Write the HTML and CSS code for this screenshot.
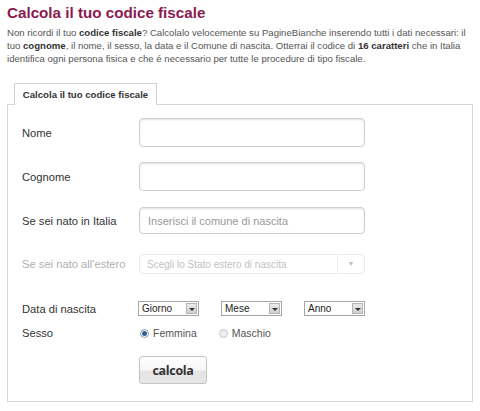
FILE: index.html
```html
<!DOCTYPE html>
<html lang="it">
<head>
<meta charset="utf-8">
<title>Calcola il tuo codice fiscale</title>
<link rel="stylesheet" href="styles.css">
</head>
<body>
<div class="page">
  <h1 class="title">Calcola il tuo codice fiscale</h1>
  <p class="intro">Non ricordi il tuo <b>codice fiscale</b>? Calcolalo velocemente su PagineBianche inserendo tutti i dati necessari: il<br>tuo <b>cognome</b>, il nome, il sesso, la data e il Comune di nascita. Otterrai il codice di <b>16 caratteri</b> che in Italia<br>identifica ogni persona fisica e che é necessario per tutte le procedure di tipo fiscale.</p>
  <div class="tabs"><div class="tab">Calcola il tuo codice fiscale</div></div>
  <div class="panel">
    <div class="row r1"><span class="label">Nome</span><span class="field"></span></div>
    <div class="row r2"><span class="label">Cognome</span><span class="field"></span></div>
    <div class="row r3"><span class="label">Se sei nato in Italia</span><span class="field short"><span class="ph">Inserisci il comune di nascita</span></span></div>
    <div class="row r4"><span class="label disabled">Se sei nato all'estero</span><span class="dsel"><span class="dtext">Scegli lo Stato estero di nascita</span><span class="darrow">&#9660;</span></span></div>
    <div class="row r5"><span class="label">Data di nascita</span>
      <div class="dates">
        <span class="sel">Giorno<span class="sarrow"></span></span>
        <span class="sel">Mese<span class="sarrow"></span></span>
        <span class="sel">Anno<span class="sarrow"></span></span>
      </div>
    </div>
    <div class="row r6"><span class="label">Sesso</span>
      <div class="radios">
        <span class="radio"><span class="dot on"></span>Femmina</span>
        <span class="radio"><span class="dot"></span>Maschio</span>
      </div>
    </div>
    <div class="row r7"><span class="label"></span><span class="btn">calcola</span></div>
  </div>
</div>
</body>
</html>
```

FILE: styles.css
```css
html, body { margin: 0; padding: 0; background: #fff; }
body { font-family: "Liberation Sans", Arial, sans-serif; }
.page { padding: 0 7px; width: 466px; }
.title {
  margin: 0; padding-top: 3px;
  font-size: 15.2px; line-height: 20px; font-weight: bold;
  color: #8a1a50;
}
.intro {
  margin: 3px 0 0 0;
  font-size: 9.6px; line-height: 13px; color: #555;
  white-space: nowrap;
}
.intro b { color: #333; }
.tabs { display: flex; padding-left: 7px; margin-top: 17px; }
.tab {
  width: 141px; height: 21px; box-sizing: content-box;
  border: 1px solid #d0d0d0; border-bottom: none;
  background: #fff;
  font-size: 9.6px; font-weight: bold; color: #333;
  line-height: 21px; text-align: center; white-space: nowrap;
  position: relative; top: 1px;
}
.panel {
  border: 1px solid #d8d8d8;
  padding: 13px 0 14px 14px;
  height: 269px; box-sizing: content-box;
  display: flex; flex-direction: column;
}
.row { display: flex; align-items: center; }
.label { width: 117px; flex: none; font-size: 11.2px; color: #333; white-space: nowrap; }
.label.disabled { color: #b0b0b0; }
.field {
  width: 216px; height: 27px;
  border: 1px solid #cfcfcf; border-radius: 4px;
  box-shadow: inset 0 1px 2px rgba(0,0,0,0.12);
  display: flex; align-items: center; padding-left: 8px;
  box-sizing: content-box;
}
.field.short { height: 25px; }
.ph { font-size: 11px; color: #999; }
.r2 { margin-top: 15px; }
.r3 { margin-top: 16px; }
.r4 { margin-top: 20px; }
.r5 { margin-top: 27px; }
.r6 { margin-top: 11px; }
.r7 { margin-top: 17px; }
.dsel {
  height: 18px; width: 217px;
  border: 1px solid #ebebeb; border-radius: 3px;
  display: flex; align-items: center; justify-content: space-between;
  padding: 0 0 0 7px; box-sizing: content-box;
}
.dtext { font-size: 10px; color: #c2c2c2; }
.darrow {
  font-size: 7px; color: #c0c0c0; width: 26px; height: 18px;
  border-left: 1px solid #f0f0f0; line-height: 18px; text-align: center;
}
.dates { display: flex; gap: 22px; margin-left: -1px; }
.sel {
  width: 56px; height: 13px;
  border: 1px solid #a5a5a5;
  font-size: 10px; color: #222; line-height: 13px;
  padding-left: 3px; box-sizing: content-box;
  display: flex; justify-content: space-between; align-items: center;
}
.sarrow {
  width: 11px; height: 11px; margin-right: 1px;
  background: linear-gradient(#eaeaea, #cfcfcf);
  border: 1px solid #b5b5b5; box-sizing: border-box;
  position: relative;
}
.sarrow::after {
  content: ""; position: absolute; left: 2px; top: 4px;
  border-left: 3px solid transparent; border-right: 3px solid transparent;
  border-top: 3px solid #333;
}
.radios { display: flex; gap: 22px; padding-left: 1px; }
.radio { display: flex; align-items: center; font-size: 10.5px; color: #555; }
.dot {
  width: 9px; height: 9px; border-radius: 50%;
  border: 1px solid #c8c8c8; background: #eee; margin-right: 4px;
  box-sizing: border-box; position: relative;
}
.dot.on { border-color: #7a9cc0; background: #fff; }
.dot.on::after {
  content: ""; position: absolute; left: 1px; top: 1px;
  width: 5px; height: 5px; border-radius: 50%; background: #2d5f8f;
}
.btn {
  width: 66px; height: 26px;
  border: 1px solid #c4c4c4; border-radius: 3px;
  background: linear-gradient(#ffffff 0%, #f6f6f6 50%, #e4e4e4 55%, #e6e6e6 100%);
  font-family: "Open Sans", "DejaVu Sans", sans-serif;
  font-size: 12.5px; font-weight: bold; color: #333;
  display: flex; align-items: center; justify-content: center;
  letter-spacing: -0.3px;
}
```
